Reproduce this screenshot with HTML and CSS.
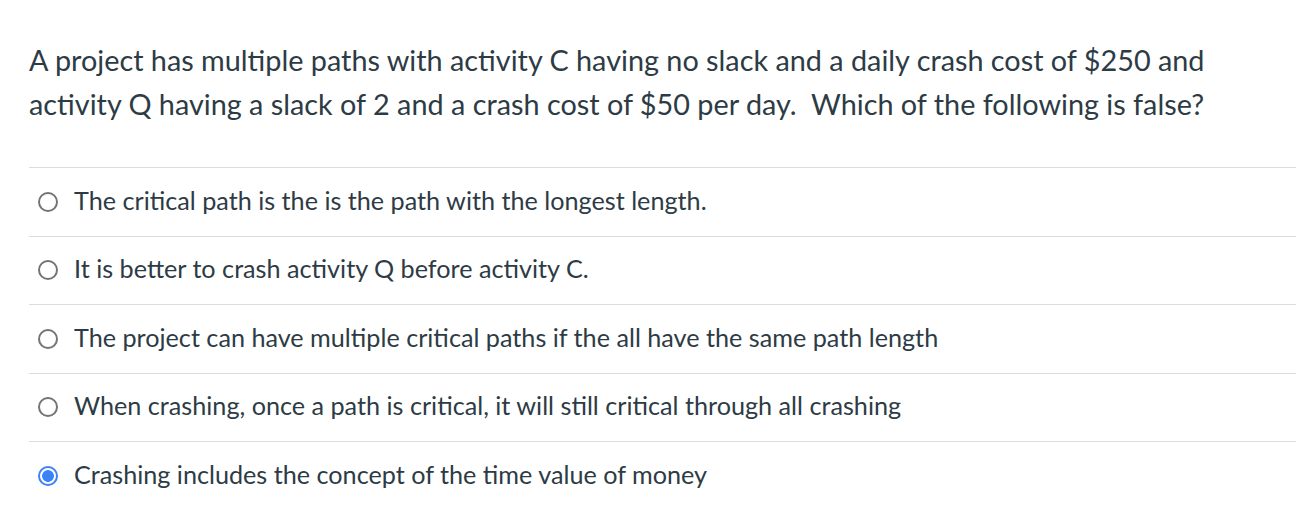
FILE: index.html
```html
<!DOCTYPE html>
<html>
<head>
<meta charset="utf-8">
<link rel="stylesheet" href="styles.css">
</head>
<body>
<div class="quiz">
  <div class="question">A project has multiple paths with activity C having no slack and a daily crash cost of $250 and activity Q having a slack of 2 and a crash cost of $50 per day.&nbsp; Which of the following is false?</div>
  <div class="answers">
    <div class="answer"><span class="radio"></span><span class="label">The critical path is the is the path with the longest length.</span></div>
    <div class="answer"><span class="radio"></span><span class="label">It is better to crash activity Q before activity C.</span></div>
    <div class="answer"><span class="radio"></span><span class="label">The project can have multiple critical paths if the all have the same path length</span></div>
    <div class="answer"><span class="radio"></span><span class="label">When crashing, once a path is critical, it will still critical through all crashing</span></div>
    <div class="answer"><span class="radio checked"></span><span class="label">Crashing includes the concept of the time value of money</span></div>
  </div>
</div>
</body>
</html>
```
FILE: styles.css
```css
html, body {
  margin: 0;
  padding: 0;
  background: #fff;
}
body {
  font-family: Lato, "Open Sans", sans-serif;
  color: #2d3b45;
}
.quiz {
  padding: 38px 10px 0 29px;
}
.question {
  font-size: 28.8px;
  line-height: 44px;
  max-width: 1200px;
}
.answers {
  margin-top: 41px;
}
.answer {
  display: flex;
  align-items: center;
  height: 67.5px;
  border-top: 1px solid #dcdcdc;
  padding-left: 9px;
  gap: 16px;
  font-size: 25.2px;
}
.label {
  position: relative;
  top: -2px;
}
.radio {
  box-sizing: border-box;
  width: 20px;
  height: 20px;
  border-radius: 50%;
  border: 2px solid #747474;
  flex: none;
  background: #fff;
}
.radio.checked {
  border: 2px solid #3b82f6;
  background: radial-gradient(circle, #3b82f6 0, #3b82f6 5.5px, #fff 6.2px);
}
```
